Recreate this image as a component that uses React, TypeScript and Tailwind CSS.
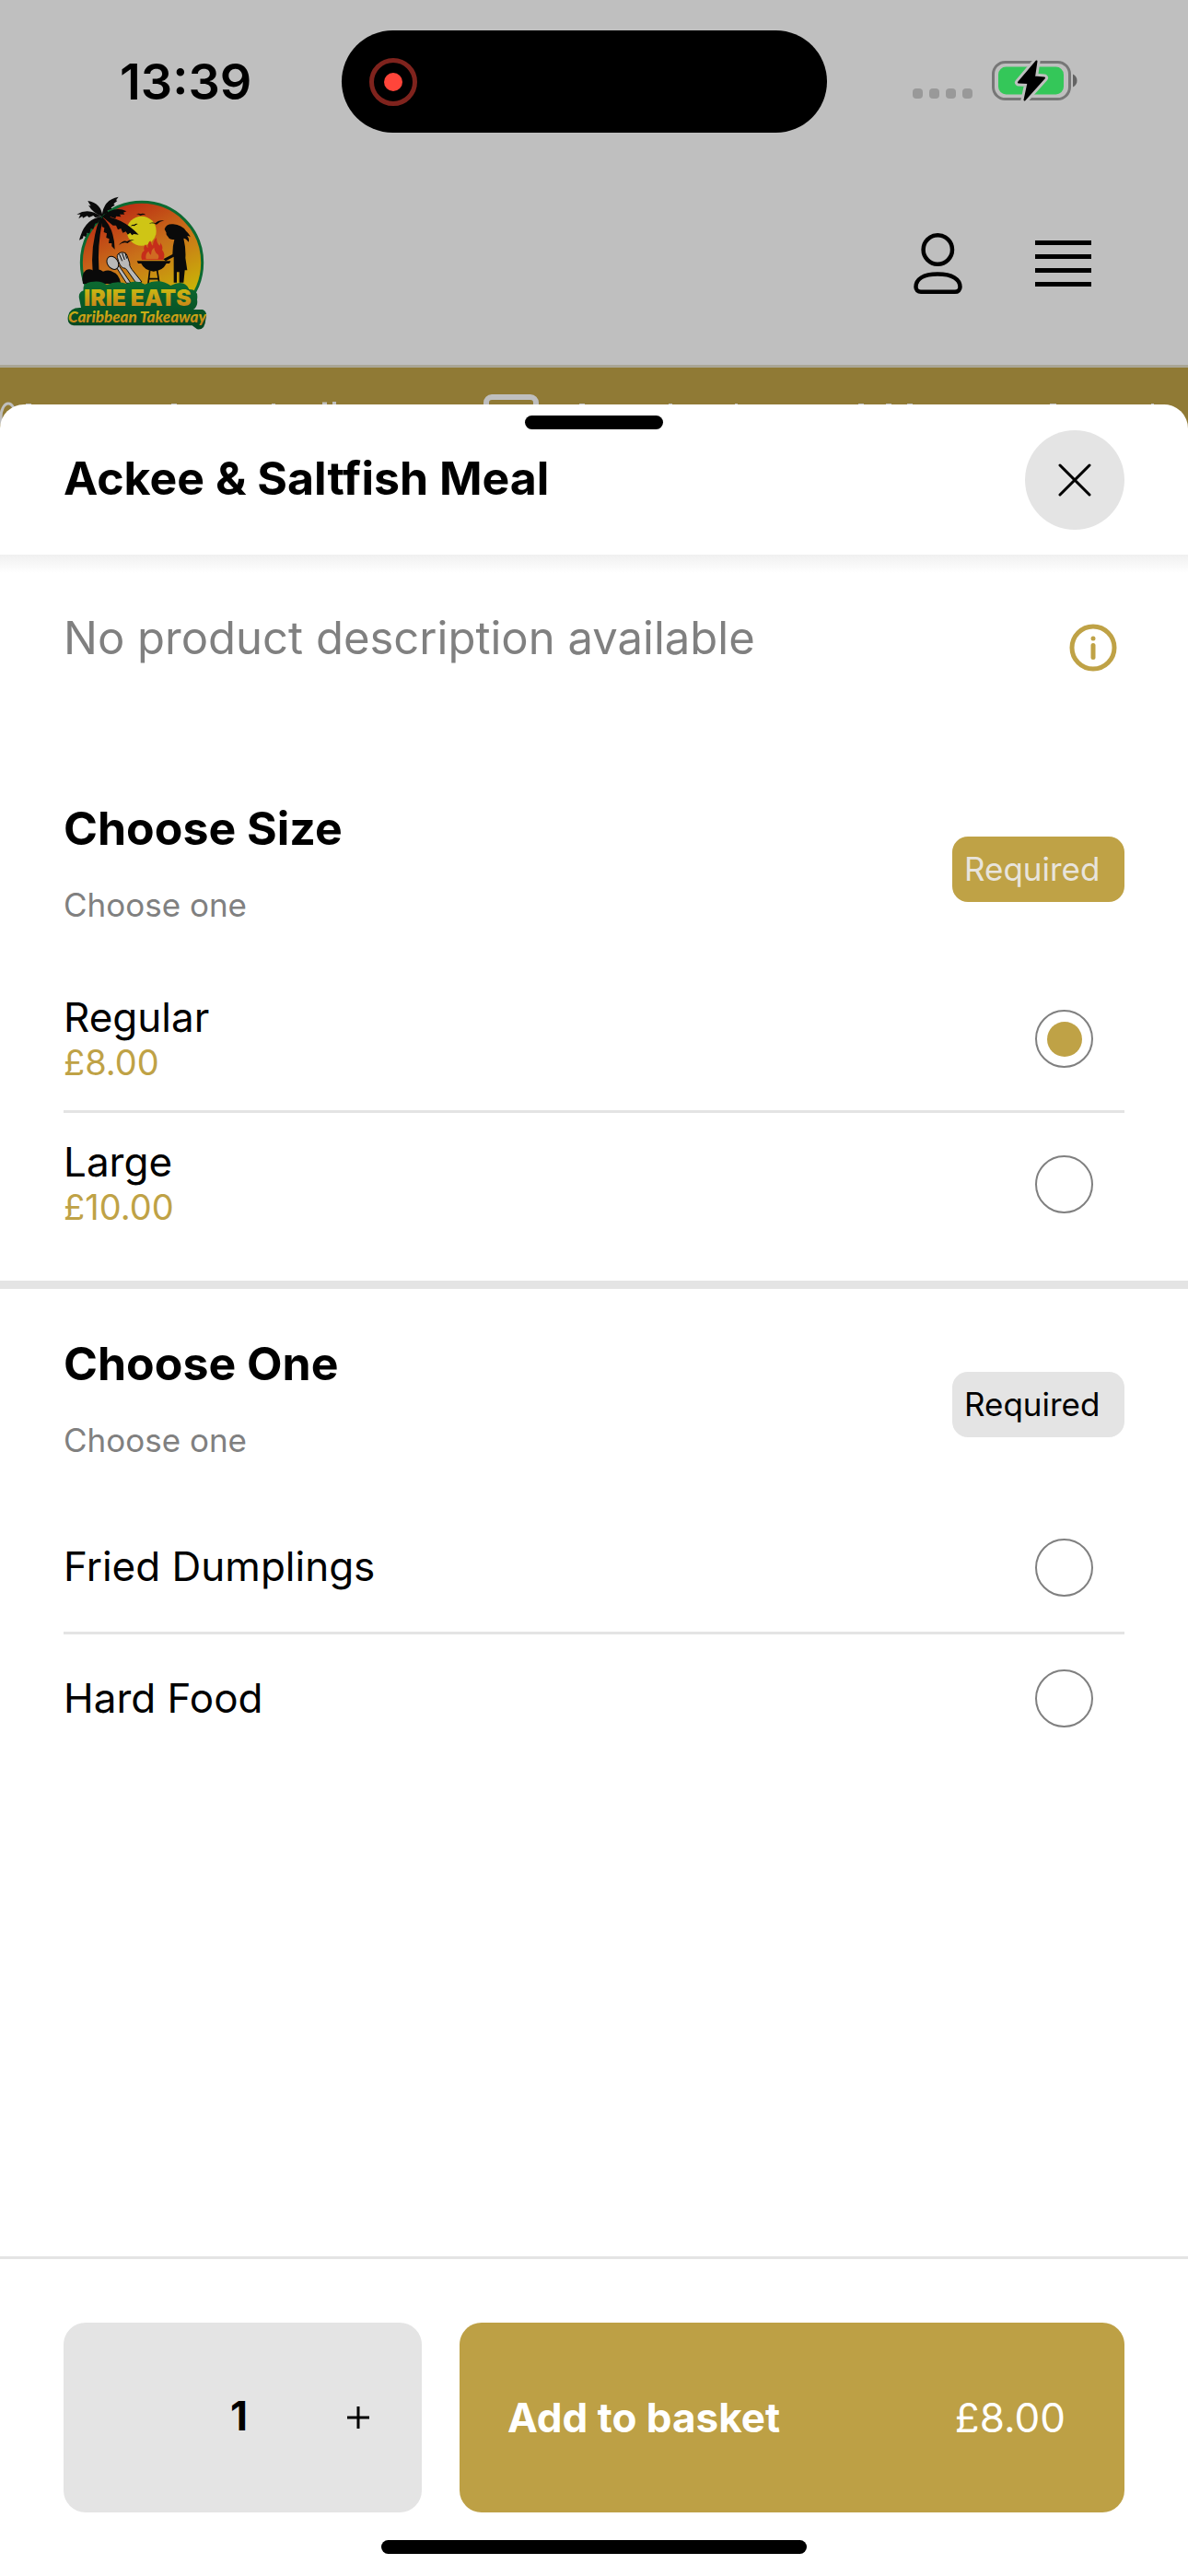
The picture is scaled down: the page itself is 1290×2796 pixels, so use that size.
import { useState } from "react";

type Option = {
  id: string;
  label: string;
  price?: number;
};

const sizes: Option[] = [
  { id: "regular", label: "Regular", price: 8 },
  { id: "large", label: "Large", price: 10 },
];

const sides: Option[] = [
  { id: "dumplings", label: "Fried Dumplings" },
  { id: "hard-food", label: "Hard Food" },
];

const formatPrice = (value: number) => `£${value.toFixed(2)}`;

const BatteryIcon = () => (
  <svg width="96" height="48" viewBox="0 0 96 48" fill="none">
    <rect x="2.5" y="4.5" width="83" height="40" rx="13" stroke="#777777" strokeWidth="3" />
    <rect x="8" y="9.5" width="71" height="30" rx="8.5" fill="#34c759" />
    <path d="M89 17.5c6 2.5 6 11.500 0 14Z" fill="#636363" />
    <path
      d="M49.500 3.500 30 26.500l10.500.5-4 18.500L58 21.500l-11-1Z"
      fill="#bfbfbf"
      stroke="#bfbfbf"
      strokeWidth="8"
      strokeLinejoin="round"
    />
    <path
      d="M49.500 3.500 30 26.500l10.500.5-4 18.500L58 21.500l-11-1Z"
      fill="#000"
      stroke="#000"
      strokeWidth="2"
      strokeLinejoin="round"
    />
  </svg>
);

const UserIcon = () => (
  <svg width="55" height="68" viewBox="0 0 55 68" fill="none" stroke="#000" strokeWidth="4.500">
    <circle cx="27.300" cy="19" r="15.700" />
    <path d="M9 64.800H46C49.300 64.800 51.500 62.500 51.500 59.500C51.500 51 43 45.500 27.300 45.500C11.500 45.500 3.500 51 3.500 59.500C3.500 62.500 5.800 64.800 9 64.800Z" />
  </svg>
);

const MenuIcon = () => (
  <svg width="61" height="52" viewBox="0 0 61 52" fill="#000">
    <rect y="1" width="61" height="5" />
    <rect y="16" width="61" height="5" />
    <rect y="31" width="61" height="5" />
    <rect y="46" width="61" height="5" />
  </svg>
);

const Logo = () => (
  <svg width="156" height="150" viewBox="27 30 468 450" role="img" aria-label="Irie Eats">
    <defs>
      <linearGradient id="sky" x1="0.200" y1="0" x2="0.700" y2="1">
        <stop offset="0" stopColor="#b81f12" />
        <stop offset="0.450" stopColor="#c9701a" />
        <stop offset="0.850" stopColor="#c9b008" />
      </linearGradient>
      <linearGradient id="gold" x1="0" y1="0" x2="0" y2="1">
        <stop offset="0.200" stopColor="#c9b813" />
        <stop offset="0.850" stopColor="#c98318" />
      </linearGradient>
      <linearGradient id="leaf" x1="0" y1="0" x2="0" y2="1">
        <stop offset="0" stopColor="#0c6a31" />
        <stop offset="1" stopColor="#06461f" />
      </linearGradient>
    </defs>
    <circle cx="282" cy="255" r="197" fill="url(#sky)" stroke="#0c6a31" strokeWidth="9" />
    <circle cx="281" cy="152" r="48" fill="#cfc515" />

    {/* birds */}
    <g fill="#0a0a0a">
      <path d="M207 198q14-18 27-12 10-8 24-4-14 0-22 10-14-6-29 6Z" />
      <path d="M305 128q13-6 21-1 10-12 29-9-14 3-25 13-12-6-25-3Z" />
      <path d="M245 137q6-8 12-5 5-5 12-3-6 2-11 7-7-3-13 1Z" />
      <path d="M264 97q8-4 14 0 8-4 17 3-9-2-17 2-7-4-14-5Z" />
    </g>

    {/* palm tree */}
    <g fill="#0a0a0a">
      <path d="M146 108Q108 210 126 312L146 312Q132 210 156 112Z" />
      <path d="M154 104Q150 62 106 54Q112 66 116 70Q112 70 108 68Q122 92 150 104Z" />
      <path d="M152 104Q156 50 206 41L198 52L202 54L190 64L194 68L182 76L184 80L170 86L172 92L158 98Z" />
      <path d="M150 106Q110 74 70 98L82 98L76 112L88 104L90 110L104 103L110 108L124 102L130 108Z" />
      <path d="M152 106Q192 68 232 88L222 92L226 98L210 98L214 106L198 104L196 112L180 106L174 114Z" />
      <path d="M150 106Q96 112 78 182L90 176L92 168L100 172L104 158L112 160L116 144L124 146L130 128L138 126Z" />
      <path d="M152 106Q192 140 194 212L184 202L184 192L174 192L176 178L166 174L168 160L158 156L160 142L152 138Z" />
      <path d="M152 104Q216 106 272 164L256 162L250 166L244 158L236 164L230 154L220 158L214 144L204 148L198 134L188 134Z" />
      <path d="M90 324Q84 292 100 280Q112 272 126 282Q140 272 156 284Q176 276 188 286Q208 292 214 324Z" />
    </g>

    {/* spoon and fork */}
    <g stroke="#0a0a0a" strokeWidth="3" fill="#b9b9b9">
      <path d="M200 272L232 322L246 322L208 266Z" />
      <ellipse cx="187" cy="256" rx="17" ry="23" transform="rotate(-35 187 256)" />
      <path d="M202 238Q200 226 214 222Q230 220 234 232L242 256Q240 266 250 278L282 318L264 322L234 280Q230 272 220 272Q210 268 202 238Z" />
      <path d="M208 226l10 24M218 224l8 22M228 224l5 18" />
    </g>

    {/* grill */}
    <path
      d="M282 246Q276 226 290 216Q286 204 294 196Q298 206 302 208Q300 190 310 184Q312 196 318 200Q318 184 330 174Q330 192 340 200Q344 194 342 190Q352 204 348 214Q360 226 352 246Z"
      fill="#c62d1a"
    />
    <path d="M296 244q-4-18 8-26 2 10 8 12 0-16 10-24 2 16 12 22 6 8 0 16Z" fill="#d06a22" />
    <path d="M266 250H376L372 258H362Q350 282 320 284Q290 280 280 258H270Z" fill="#0a0a0a" />
    <path d="M308 280L302 330M332 280L340 330M306 308H338" stroke="#0a0a0a" strokeWidth="5" />

    {/* cook */}
    <path
      d="M356 146Q362 128 384 130Q412 132 426 152Q438 162 440 172Q436 168 430 168Q438 180 434 188Q426 176 418 176Q426 210 424 240L430 280H422L418 320H404V286H396V320H386V236L360 250L352 244L382 228Q382 200 388 180Q372 182 368 172Q360 164 362 158Z"
      fill="#0a0a0a"
    />

    {/* name plate */}
    <path
      d="M78 372Q74 352 92 346Q88 322 116 318Q150 312 168 328Q200 312 232 324Q262 308 292 326Q340 304 376 330Q420 308 436 342Q468 342 462 376Q466 396 450 408H480Q498 416 490 440Q488 476 462 472L446 460H60Q36 456 42 428Q48 400 84 402Z"
      fill="url(#leaf)"
    />
    <text
      x="268"
      y="396"
      textAnchor="middle"
      fontFamily="Inter, sans-serif"
      fontWeight="900"
      fontSize="74"
      fill="url(#gold)"
    >
      IRIE EATS
    </text>
    <text
      x="267"
      y="449"
      textAnchor="middle"
      fontFamily="Lato, sans-serif"
      fontWeight="900"
      fontStyle="italic"
      fontSize="51"
      fill="url(#gold)"
    >
      Caribbean Takeaway
    </text>
  </svg>
);

const StatusBar = () => (
  <div className="flex items-center pt-[33px] pb-[30px] pl-[130px] pr-[118px]">
    <span className="w-[241px] text-[54px] leading-[60px] font-semibold">13:39</span>
    <div className="flex h-[111px] w-[527px] items-center rounded-full bg-black pl-[30px]">
      <div className="flex size-[52px] items-center justify-center rounded-full border-[5px] border-[#7f231d]">
        <div className="size-5 rounded-full bg-[#ff453a]" />
      </div>
    </div>
    <div className="ml-auto flex items-end gap-5 pb-1">
      <div className="flex gap-[7px] pb-1">
        {[0, 1, 2, 3].map((dot) => (
          <span key={dot} className="size-[11px] rounded-[4px] bg-[#999999]" />
        ))}
      </div>
      <BatteryIcon />
    </div>
  </div>
);

const SiteHeader = () => (
  <header className="flex h-[225px] items-center border-b-[3px] border-[#aaa696] pl-[69px] pr-[105px]">
    <a href="#home" aria-label="Home">
      <Logo />
    </a>
    <div className="ml-auto flex items-center gap-[78px] pt-0.5">
      <button aria-label="Account">
        <UserIcon />
      </button>
      <button aria-label="Menu">
        <MenuIcon />
      </button>
    </div>
  </header>
);

// Only the upper edge shows above the sheet
const PromoBanner = () => (
  <div className="h-20 overflow-hidden bg-[#907a35]">
    <svg width="1290" height="80" viewBox="0 0 1290 80" fill="none" stroke="#bfbfbf">
      <ellipse cx="9" cy="54" rx="8" ry="15" strokeWidth="3" />
      <rect x="528" y="32" width="54" height="48" rx="6" strokeWidth="6" />
      <path d="M350 39h5M361 38.500h4" strokeWidth="3" />
      <path
        d="M28 39.500h6M186 39.500h6M295 39.500h4M629 39.500h6M726 39.500h4M798 39.500h3M932 39.500h6M962 39.500h6M985 39.500h6M1140 39.500h7M1250 39.500h3"
        strokeWidth="1"
      />
    </svg>
  </div>
);

type OptionGroupProps = {
  name: string;
  title: string;
  options: Option[];
  selected: string;
  onSelect: (id: string) => void;
};

const OptionGroup = ({ name, title, options, selected, onSelect }: OptionGroupProps) => (
  <section className="px-[69px]">
    <div className="flex items-center justify-between pt-[51px] pb-[35px]">
      <div className="pb-3">
        <h2 className="text-[50px] leading-[60px] font-bold">{title}</h2>
        <p className="mt-[30px] text-[35px] leading-[46px] text-[#808080]">Choose one</p>
      </div>
      <span
        className={`h-[71px] w-[187px] rounded-[17px] pl-[13px] text-[35px] leading-[70px] ${
          selected ? "bg-[#bfa246] text-[#e8e4dc]" : "bg-[#e4e4e4] text-black"
        }`}
      >
        Required
      </span>
    </div>
    <div className="divide-y-[3px] divide-[#e4e4e4]">
      {options.map((option) => (
        <label
          key={option.id}
          className={`flex items-center justify-between pr-[34px] pb-0.5 ${option.price ? "h-[156px]" : "h-[141px]"}`}
        >
          <span className="flex flex-col pb-0.5">
            <span className="text-[44px] leading-[52px]">{option.label}</span>
            {option.price && (
              <span className="text-[38px] leading-[46px] text-[#bfa246]">{formatPrice(option.price)}</span>
            )}
          </span>
          <input
            type="radio"
            name={name}
            value={option.id}
            checked={selected === option.id}
            onChange={() => onSelect(option.id)}
            className="grid size-[63px] appearance-none place-items-center rounded-full border-2 border-[#808080] before:size-[38px] before:rounded-full checked:before:bg-[#bfa246]"
          />
        </label>
      ))}
    </div>
  </section>
);

export default function App() {
  const [size, setSize] = useState("regular");
  const [side, setSide] = useState("");
  const [quantity, setQuantity] = useState(1);

  const unitPrice = sizes.find((s) => s.id === size)?.price ?? 0;

  return (
    <div className="flex min-h-screen flex-col bg-[#bfbfbf] font-['Inter',sans-serif] text-black">
      <StatusBar />
      <SiteHeader />
      <PromoBanner />

      <div
        role="dialog"
        aria-labelledby="product-title"
        className="relative -mt-10 flex flex-1 flex-col rounded-t-[26px] bg-white"
      >
        <div className="absolute inset-x-0 top-3 mx-auto h-[15px] w-[150px] rounded-full bg-black" />
        <div className="flex h-[163px] items-center justify-between px-[69px]">
          <h1 id="product-title" className="pb-1 text-[50px] leading-[60px] font-bold">
            Ackee &amp; Saltfish Meal
          </h1>
          <button
            aria-label="Close"
            className="flex size-[108px] items-center justify-center rounded-full bg-[#e4e4e4]"
          >
            <svg width="36" height="36" viewBox="0 0 36 36" stroke="#000" strokeWidth="3" strokeLinecap="round">
              <path d="M2 2L34 34M34 2L2 34" />
            </svg>
          </button>
        </div>

        <main className="flex-1">
          <div className="h-5 bg-linear-to-b from-[#f0f0f0] to-white" />
          <div className="flex items-end justify-between px-[69px] pt-[41px] pb-[81px]">
            <p className="pb-[14px] text-[49px] leading-[60px] text-[#808080]">No product description available</p>
            <button aria-label="Product information">
              <svg width="68" height="68" viewBox="0 0 68 68" fill="none" stroke="#bfa246" strokeWidth="5">
                <circle cx="34" cy="34" r="23" />
                <path d="M34 31.500V44.500" strokeLinecap="round" />
                <circle cx="34" cy="24" r="2.500" fill="#bfa246" stroke="none" />
              </svg>
            </button>
          </div>

          <OptionGroup name="size" title="Choose Size" options={sizes} selected={size} onSelect={setSize} />
          <div className="mt-[26px] h-[9px] bg-[#e4e4e4]" />
          <OptionGroup name="side" title="Choose One" options={sides} selected={side} onSelect={setSide} />
        </main>

        <footer className="border-t-[3px] border-[#e4e4e4] px-[69px] pt-[69px] pb-6">
          <div className="flex h-[206px] gap-[41px]">
            <div className="grid w-[389px] grid-cols-3 items-center rounded-3xl bg-[#e4e4e4] px-1.5 text-center text-[44px] leading-[52px]">
              <button
                aria-label="Remove one"
                className={quantity > 1 ? "" : "invisible"}
                onClick={() => setQuantity(quantity - 1)}
              >
                −
              </button>
              <span className="pr-2 pb-1 font-bold">{quantity}</span>
              <button
                aria-label="Add one"
                className="flex items-center justify-center"
                onClick={() => setQuantity(quantity + 1)}
              >
                <svg width="26" height="26" viewBox="0 0 26 26" stroke="#000" strokeWidth="3">
                  <path d="M13 1V25M1 13H25" />
                </svg>
              </button>
            </div>
            <button className="flex flex-1 items-center justify-between rounded-3xl bg-[#bda045] pr-[64px] pl-[52px] text-[44px] leading-[52px] text-white">
              <span className="font-bold">Add to basket</span>
              <span>{formatPrice(unitPrice * quantity)}</span>
            </button>
          </div>
          <div className="mx-auto mt-[30px] h-[15px] w-[462px] rounded-full bg-black" />
        </footer>
      </div>
    </div>
  );
}
